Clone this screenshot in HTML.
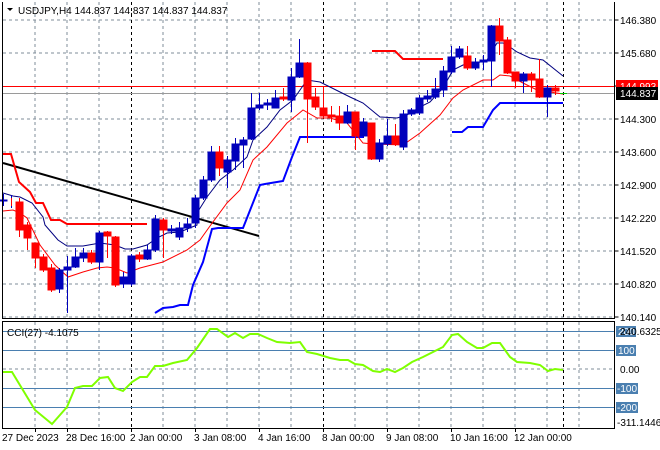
<!DOCTYPE html>
<html><head><meta charset="utf-8"><style>
body{margin:0;background:#fff;width:660px;height:450px;overflow:hidden;font-family:"Liberation Sans",sans-serif}
svg{display:block}
text{font-family:"Liberation Sans",sans-serif;font-size:10px}
</style></head><body>
<svg width="660" height="450" viewBox="0 0 660 450">
<rect width="660" height="450" fill="#fff"/>
<g stroke="#7f8c99" stroke-width="1" stroke-dasharray="3,3" fill="none">
<path d="M3 20H614M3 53H614M3 119H614M3 152H614M3 185H614M3 218H614M3 251H614M3 284H614M3 317H614"/>
<path d="M35 2V318M67 2V318M99 2V318M163 2V318M195 2V318M227 2V318M259 2V318M291 2V318M355 2V318M387 2V318M419 2V318M451 2V318M483 2V318M515 2V318M547 2V318M579 2V318"/>
<path d="M35 322V428M67 322V428M99 322V428M163 322V428M195 322V428M227 322V428M259 322V428M291 322V428M355 322V428M387 322V428M419 322V428M451 322V428M483 322V428M515 322V428M547 322V428M579 322V428M3 369H614"/>
</g>
<g stroke="#000" stroke-width="1" stroke-dasharray="3,3">
<path d="M131.5 2V318M323.5 2V318M563.5 2V318M131.5 322V428M323.5 322V428M563.5 322V428"/>
</g>
<g stroke="#4a7fb0" stroke-width="1"><path d="M3 331.5H614M3 350.5H614M3 388.5H614M3 407.5H614"/></g>
<path d="M3 86.5H614" stroke="#ff0000"/>
<path d="M3 93.5H614" stroke="#9a9a9a"/>
<path d="M3 163L259 236" stroke="#000" stroke-width="2"/>
<path d="M3 154H11L19 182L30 192L36 203H43L51 220H60L67 224H147" stroke="#ff0000" stroke-width="2" fill="none"/>
<path d="M372 51H395L403 59H443" stroke="#ff0000" stroke-width="2" fill="none"/>
<path d="M155 313L163 308L173 307L180 305H188L193 285L203 262L212 229L218 228H243L245 223L260 185L265 184L283 181L292 157L300 137H363" stroke="#0000ff" stroke-width="2" fill="none"/>
<path d="M452 132H462L468 127H483L493 110L500 103H563" stroke="#0000ff" stroke-width="2" fill="none"/>
<path d="M3 193L13 196L20 197L32 203L43 217L45 225L58 240L67 246H83L100 243L115 245L125 249H133L147 245L157 238L167 233L180 232L197 225L197 213L207 197L220 180L233 170L247 157L253 140L267 127L280 110L293 100L307 80L320 82L330 87L350 97L363 103L380 117L397 118L407 115L420 107L430 102L443 88L453 70L463 65L477 63L487 60L497 43L503 43L510 47L517 52L530 58L543 60L563 76" stroke="#000080" stroke-width="1" fill="none"/>
<path d="M3 211L13 210L20 213L27 218L40 245L55 265L68 277L83 272L97 268L107 267L115 268L127 273L140 268L163 262L187 250L200 240L210 226L227 203L240 190L253 160L267 147L287 123L297 115L303 110L317 118L330 118L347 123L363 143L373 144L403 145L420 133L440 115L453 98L463 90L483 80L493 80L500 75L510 76L523 83L537 90L563 94" stroke="#ff0000" stroke-width="1" fill="none"/>
<g stroke-width="1">
<g stroke="#0000bb" fill="#0000bb">
<path d="M3.5 194V206M11.5 195V208"/><rect x="0" y="200" width="7" height="1"/>
<path d="M59.5 268V293"/><rect x="56" y="270" width="7" height="19"/>
<path d="M67.5 256V313"/><rect x="64" y="267" width="7" height="3"/>
<path d="M75.5 248V268"/><rect x="72" y="257" width="7" height="10"/>
<path d="M83.5 248V262"/><rect x="80" y="253" width="7" height="5"/>
<path d="M99.5 231V270"/><rect x="96" y="233" width="7" height="29"/>
<path d="M123.5 272V288"/><rect x="120" y="277" width="7" height="7"/>
<path d="M131.5 254V286"/><rect x="128" y="256" width="7" height="28"/>
<path d="M147.5 245V260"/><rect x="144" y="250" width="7" height="9"/>
<path d="M155.5 215V252"/><rect x="152" y="219" width="7" height="31"/>
<path d="M171.5 225V234"/><rect x="168" y="229" width="7" height="2"/>
<path d="M179.5 222V240"/><rect x="176" y="228" width="7" height="9"/>
<path d="M187.5 218V232"/><rect x="184" y="224" width="7" height="4"/>
<path d="M195.5 195V228"/><rect x="192" y="198" width="7" height="25"/>
<path d="M203.5 176V200"/><rect x="200" y="180" width="7" height="18"/>
<path d="M211.5 146V182"/><rect x="208" y="152" width="7" height="28"/>
<path d="M227.5 156V188"/><rect x="224" y="160" width="7" height="12"/>
<path d="M235.5 138V170"/><rect x="232" y="144" width="7" height="17"/>
<path d="M243.5 137V168"/><rect x="240" y="140" width="7" height="5"/>
<path d="M251.5 93V140"/><rect x="248" y="108" width="7" height="31"/>
<path d="M259.5 93V110"/><rect x="256" y="105" width="7" height="3"/>
<path d="M267.5 99V110"/><rect x="264" y="103" width="7" height="2"/>
<path d="M275.5 90V108"/><rect x="272" y="98" width="7" height="10"/>
<path d="M291.5 68V112"/><rect x="288" y="77" width="7" height="23"/>
<path d="M299.5 39V78"/><rect x="296" y="63" width="7" height="14"/>
<path d="M347.5 105V124"/><rect x="344" y="112" width="7" height="11"/>
<path d="M363.5 118V138"/><rect x="360" y="122" width="7" height="14"/>
<path d="M379.5 139V162"/><rect x="376" y="143" width="7" height="16"/>
<path d="M387.5 119V146"/><rect x="384" y="136" width="7" height="8"/>
<path d="M403.5 110V150"/><rect x="400" y="114" width="7" height="33"/>
<path d="M411.5 108V116"/><rect x="408" y="110" width="7" height="4"/>
<path d="M419.5 95V115"/><rect x="416" y="98" width="7" height="15"/>
<path d="M427.5 90V102"/><rect x="424" y="96" width="7" height="3"/>
<path d="M435.5 78V99"/><rect x="432" y="89" width="7" height="8"/>
<path d="M443.5 66V97"/><rect x="440" y="71" width="7" height="19"/>
<path d="M451.5 46V74"/><rect x="448" y="57" width="7" height="15"/>
<path d="M459.5 46V59"/><rect x="456" y="49" width="7" height="8"/>
<path d="M475.5 58V70"/><rect x="472" y="62" width="7" height="6"/>
<path d="M483.5 55V70"/><rect x="480" y="60" width="7" height="2"/>
<path d="M491.5 25V87"/><rect x="488" y="26" width="7" height="35"/>
<path d="M523.5 72V93"/><rect x="520" y="74" width="7" height="7"/>
<path d="M547.5 85V117"/><rect x="544" y="88" width="7" height="9"/>
</g>
<g stroke="#ff0000" fill="#ff0000">
<path d="M11.5 198V206"/>
<path d="M19.5 198V237"/><rect x="16" y="202" width="7" height="28"/>
<path d="M27.5 222V250"/><rect x="24" y="225" width="7" height="13"/>
<path d="M35.5 243V268"/><rect x="32" y="243" width="7" height="15"/>
<path d="M43.5 254V272"/><rect x="40" y="257" width="7" height="13"/>
<path d="M51.5 264V292"/><rect x="48" y="268" width="7" height="22"/>
<path d="M91.5 250V264"/><rect x="88" y="253" width="7" height="9"/>
<path d="M107.5 231V258"/><rect x="104" y="232" width="7" height="4"/>
<path d="M115.5 236V287"/><rect x="112" y="237" width="7" height="48"/>
<path d="M139.5 252V262"/><rect x="136" y="255" width="7" height="4"/>
<path d="M163.5 218V258"/><rect x="160" y="220" width="7" height="10"/>
<path d="M219.5 146V176"/><rect x="216" y="152" width="7" height="16"/>
<path d="M283.5 88V101"/><rect x="280" y="97" width="7" height="2"/>
<path d="M307.5 62V143"/><rect x="304" y="63" width="7" height="36"/>
<path d="M315.5 88V110"/><rect x="312" y="97" width="7" height="10"/>
<path d="M323.5 87V118"/><rect x="320" y="108" width="7" height="8"/>
<path d="M331.5 106V122"/><rect x="328" y="115" width="7" height="2"/>
<path d="M339.5 106V130"/><rect x="336" y="116" width="7" height="7"/>
<path d="M355.5 112V150"/><rect x="352" y="112" width="7" height="24"/>
<path d="M371.5 123V160"/><rect x="368" y="123" width="7" height="36"/>
<path d="M395.5 124V146"/><rect x="392" y="136" width="7" height="8"/>
<path d="M467.5 46V70"/><rect x="464" y="56" width="7" height="12"/>
<path d="M499.5 18V55"/><rect x="496" y="26" width="7" height="15"/>
<path d="M507.5 37V74"/><rect x="504" y="40" width="7" height="33"/>
<path d="M515.5 72V88"/><rect x="512" y="72" width="7" height="9"/>
<path d="M531.5 72V92"/><rect x="528" y="74" width="7" height="6"/>
<path d="M539.5 59V98"/><rect x="536" y="79" width="7" height="18"/>
<path d="M555.5 85V95"/><rect x="552" y="88" width="7" height="3"/>
</g>
<path d="M560 93.5H567" stroke="#00cc00"/>
</g>
<path d="M3 372L12 372L35 410L52 424L67 407L75 388L83 386L92 386L100 378L108 377L115 388L123 391L132 382L140 377L147 377L155 366L163 366L173 363L187 360L197 348L210 329L217 329L228 337L235 333L243 338L250 334L258 334L267 338L277 342L290 343L300 342L307 352L317 354L330 358L340 360L348 360L355 364L363 365L373 371L380 372L387 369L395 372L403 368L412 362L423 357L433 352L443 347L452 335L458 334L467 342L477 348L483 348L492 343L500 343L510 357L517 362L530 363L540 365L548 371L555 369L563 370" stroke="#7fff00" stroke-width="2" fill="none"/>
<g stroke="#000" fill="none" stroke-width="1">
<path d="M2.5 2V318.5H614.5V2"/>
<path d="M2.5 321.5H614.5V428.5H2.5Z"/>
<path d="M614.5 20h4M614.5 53h4M614.5 86h4M614.5 119h4M614.5 152h4M614.5 185h4M614.5 218h4M614.5 251h4M614.5 284h4M614.5 317h4"/>
<path d="M35.5 428v4M67.5 428v4M131.5 428v4M195.5 428v4M259.5 428v4M323.5 428v4M387.5 428v4M451.5 428v4M515.5 428v4"/>
</g>
<path d="M7 8H13L10 11Z" fill="#000"/>
<text x="18" y="14" fill="#000">USDJPY,H4  144.837 144.837 144.837 144.837</text>
<text x="7" y="336" fill="#000">CCI(27) -4.1075</text>
<g fill="#000">
<text x="620" y="24">146.380</text>
<text x="620" y="57">145.680</text>
<text x="620" y="123">144.300</text>
<text x="620" y="156">143.600</text>
<text x="620" y="189">142.900</text>
<text x="620" y="222">142.220</text>
<text x="620" y="255">141.520</text>
<text x="620" y="288">140.820</text>
<text x="620" y="321">140.140</text>
</g>
<rect x="616" y="80" width="42" height="12" fill="#ff0000"/>
<text x="620" y="90" fill="#fff">144.993</text>
<rect x="616" y="87" width="42" height="13" fill="#000"/>
<text x="620" y="97" fill="#fff">144.837</text>
<rect x="616" y="326" width="20" height="11" fill="#4a7fb0"/>
<text x="618" y="335" fill="#fff">200</text>
<text x="620" y="335" fill="#000">240.6325</text>
<rect x="616" y="345" width="20" height="11" fill="#4a7fb0"/>
<text x="618" y="354" fill="#fff">100</text>
<text x="620" y="373" fill="#000">0.00</text>
<rect x="616" y="383" width="22" height="11" fill="#4a7fb0"/>
<text x="617" y="392" fill="#fff">-100</text>
<rect x="616" y="402" width="22" height="11" fill="#4a7fb0"/>
<text x="617" y="411" fill="#fff">-200</text>
<text x="617" y="426" fill="#000">-311.1446</text>
<g fill="#000">
<text x="2" y="441">27 Dec 2023</text>
<text x="66" y="441">28 Dec 16:00</text>
<text x="130" y="441">2 Jan 00:00</text>
<text x="194" y="441">3 Jan 08:00</text>
<text x="258" y="441">4 Jan 16:00</text>
<text x="322" y="441">8 Jan 00:00</text>
<text x="386" y="441">9 Jan 08:00</text>
<text x="450" y="441">10 Jan 16:00</text>
<text x="514" y="441">12 Jan 00:00</text>
</g>
</svg>
</body></html>
